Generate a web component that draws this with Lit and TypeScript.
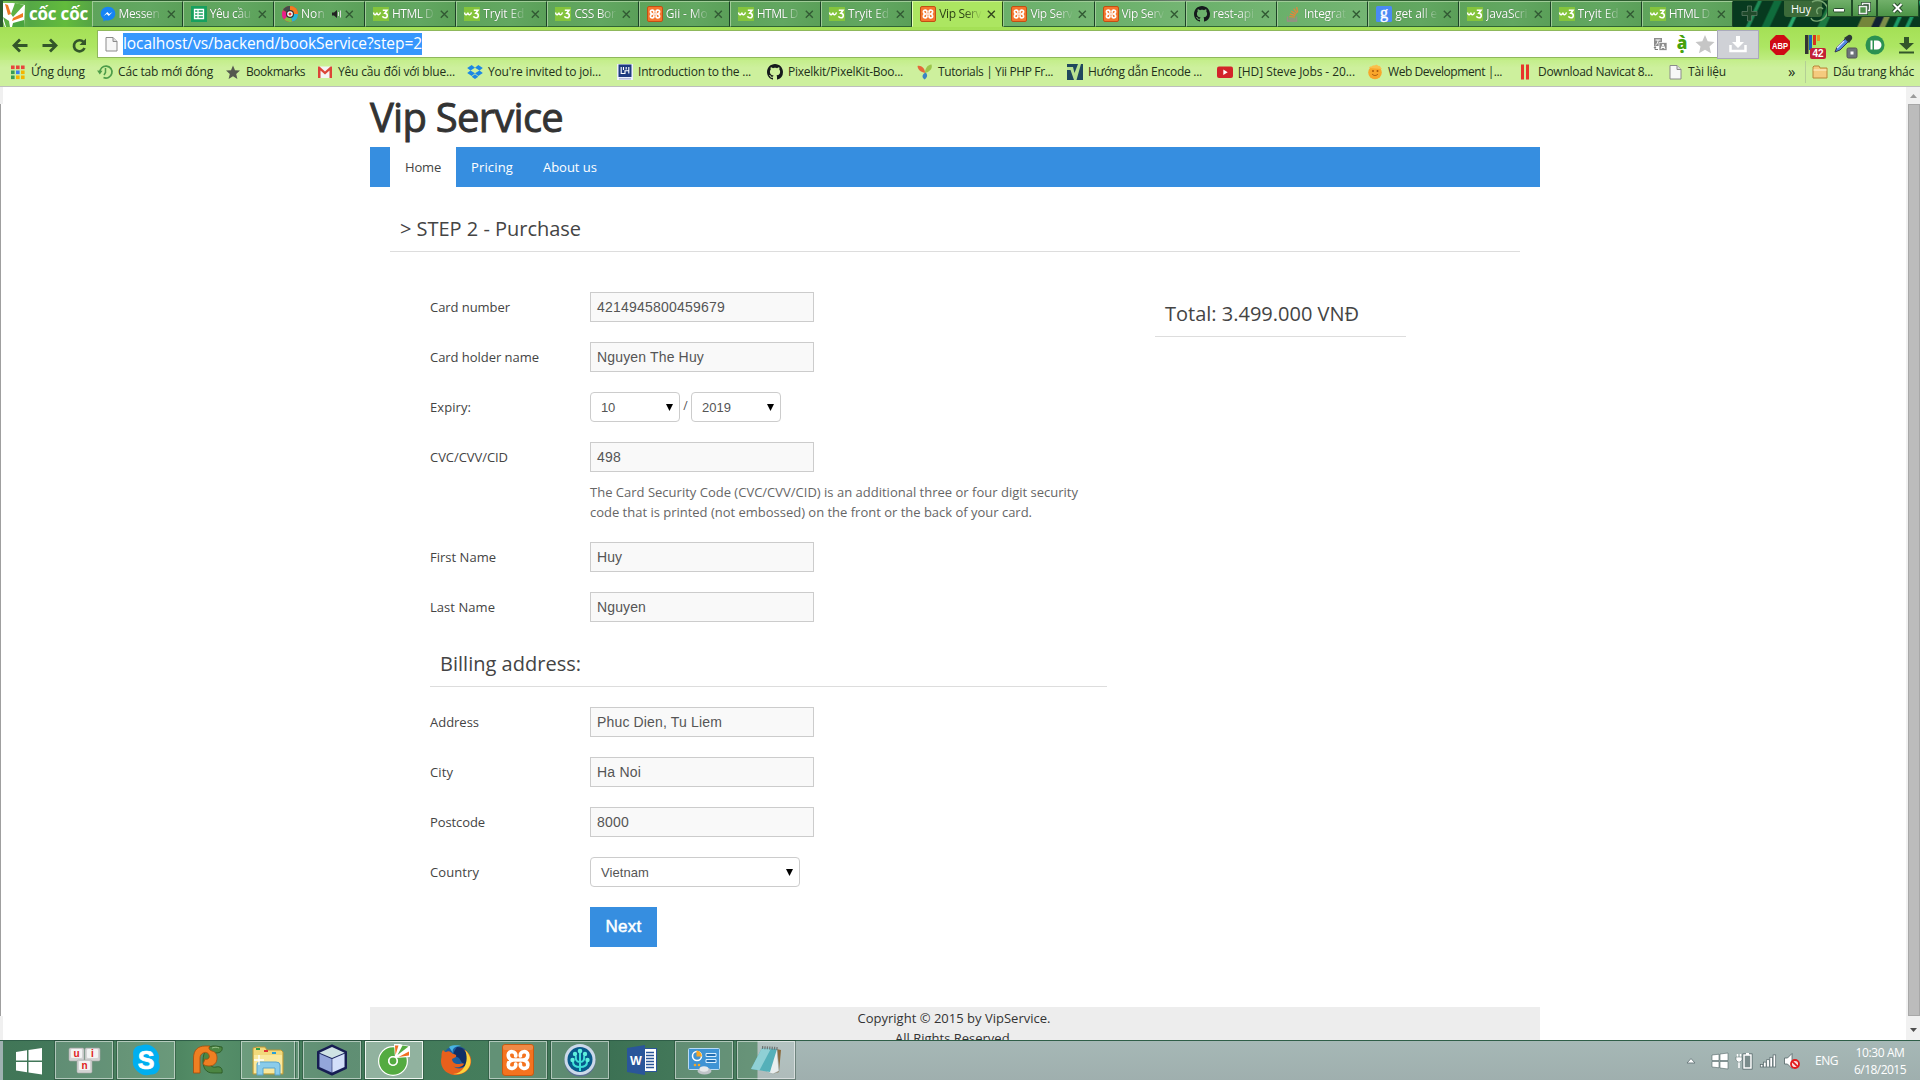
import { LitElement, html, css, svg, nothing } from "lit";
import { customElement } from "lit/decorators.js";

const ico = (body: unknown, w = 16, h = 16, vb = `0 0 ${w} ${h}`) =>
  html`<svg class="ico" width=${w} height=${h} viewBox=${vb}>${body}</svg>`;

const messenger = svg`<path d="M8 .8C3.900.8.7 3.800.7 7.600c0 2.200 1 4.100 2.700 5.400V15.500l2.300-1.300c.7.2 1.500.3 2.300.3 4.100 0 7.300-3 7.300-6.900S12.100.8 8 .8z" fill="#1684f5"/><path d="M3.500 10l3.800-4 2 1.900L12.500 6 8.800 10 6.800 8.100z" fill="#fff"/>`;
const sheets = svg`<rect width="16" height="16" fill="#17a05e"/><path d="M3.500 3.500h9v9h-9zM3.500 6.500h9M3.500 9.500h9M7 3.500v9" fill="none" stroke="#fff" stroke-width="1.300"/>`;
const disc = svg`<circle cx="8" cy="8" r="8" fill="#e93a3f"/><path d="M8 8L1 4A8 8 0 0 1 9 0z" fill="#444a4a"/><path d="M8 8V0a8 8 0 0 1 8 8z" fill="#f47b20"/><path d="M8 8h8a8 8 0 0 1-6 7.700z" fill="#24b6d6"/><path d="M8 8l2 7.700A8 8 0 0 1 2 13.300z" fill="#7dc243"/><path d="M8 8l-6 5.300A8 8 0 0 1 .6 5z" fill="#e8208b"/><circle cx="8" cy="8" r="4" fill="#333"/><circle cx="8" cy="8" r="2.800" fill="#fff"/><circle cx="8" cy="8" r="1.500" fill="#e33"/>`;
const w3 = svg`<rect y="1" width="16" height="14" fill="#84c43c"/><path d="M.6 6.500c.2 2 1 2.500 2 2 .8-.3 1.200-1 1.300-1.800.2 1.800 1 2.300 2 1.900 1-.4 1.300-1.200 1.600-2.200" fill="none" stroke="#fff" stroke-width="1.500"/><path d="M9.800 4.200h4.200l-2.200 3c3.400 0 3.200 4.600.2 4.600-1.300 0-2.200-.7-2.500-1.600" fill="none" stroke="#fff" stroke-width="1.600"/>`;
const xamppMark = svg`<path d="M6.900 6.100C7.300 3.700 3.500 3.300 3.400 5.600c0 1.400 1.100 2.200 2.200 2.400-1.100.2-2.200 1-2.200 2.400.1 2.300 3.900 1.900 3.500-.5M9.100 6.100C8.700 3.700 12.500 3.300 12.600 5.600c0 1.400-1.100 2.200-2.200 2.400 1.100.2 2.200 1 2.200 2.400-.1 2.300-3.900 1.900-3.500-.5M5.400 8h5.200" fill="none" stroke="#fff" stroke-width="1.700" stroke-linecap="round"/>`;
const xampp = svg`<rect x=".5" y=".5" width="15" height="15" rx="1.500" fill="#f4772e" stroke="#c24e13"/>${xamppMark}`;
const github = svg`<path fill="#15191c" d="M8 0C3.580 0 0 3.580 0 8c0 3.540 2.290 6.530 5.470 7.590.4.070.55-.17.55-.38 0-.19-.01-.82-.01-1.490-2.010.37-2.530-.49-2.690-.94-.09-.23-.48-.94-.82-1.130-.28-.15-.68-.52-.01-.53.63-.01 1.080.58 1.230.82.72 1.210 1.870.87 2.330.66.07-.52.28-.87.51-1.070-1.780-.2-3.640-.89-3.640-3.950 0-.87.31-1.590.82-2.150-.08-.2-.36-1.020.08-2.120 0 0 .67-.21 2.200.82.64-.18 1.320-.27 2-.27s1.360.09 2 .27c1.530-1.040 2.200-.82 2.200-.82.44 1.100.16 1.920.08 2.120.51.56.82 1.270.82 2.150 0 3.070-1.870 3.750-3.650 3.950.29.25.54.73.54 1.480 0 1.070-.01 1.930-.01 2.200 0 .21.15.46.55.38A8.010 8.010 0 0 0 16 8c0-4.420-3.580-8-8-8z"/>`;
const stack = svg`<path d="M2.500 10.500v4.500h9v-4.500" fill="none" stroke="#9d8a86" stroke-width="1.400"/><path d="M4.200 13h5.600" stroke="#9d8a86" stroke-width="1.300"/><path d="M4.300 10.600l5.600.5M4.900 8l5.400 1.500M6.300 5.200l4.800 2.900M8.700 2.600l3.300 4.500M11.700 1l1 5.300" stroke="#e0873c" stroke-width="1.300"/>`;
const google = svg`<rect width="16" height="16" rx="1.500" fill="#4a8af4"/><text x="8" y="11.500" text-anchor="middle" font-family="Liberation Serif,serif" font-size="16" fill="#fff" stroke="#fff" stroke-width=".4">g</text>`;
const docIcon = svg`<path d="M3 1.500h7l4 4v9.500H3z" fill="#f7f7f7" stroke="#8b8b8b"/><path d="M10 1.500v4h4" fill="#ddd" stroke="#8b8b8b"/>`;

const apps = svg`${["#e8453c", "#e8453c", "#e8453c", "#3a9b54", "#3b7ded", "#f4b400", "#3a9b54", "#f4b400", "#f4b400"].map(
  (c, i) => svg`<rect x=${1 + (i % 3) * 5} y=${1.5 + Math.floor(i / 3) * 5} width="3.600" height="3.600" fill=${c} />`)}`;
const recent = svg`<path d="M3 8.500a6 6 0 1 1 3.500 5" fill="none" stroke="#4d9c49" stroke-width="1.700"/><path d="M0 6.500l5.500.3L2.800 10.500z" fill="#4d9c49"/><path d="M8.500 4v4.500l-1.500 2.500" fill="none" stroke="#4d9c49" stroke-width="1.500"/>`;
const star = svg`<path d="M8 1.500l2 4.700 5 .4-3.800 3.300 1.200 5L8 12.200 3.600 14.900l1.200-5L1 6.600l5-.4z" fill="#55594f"/>`;
const gmail = svg`<rect x="1" y="2.500" width="14" height="11.500" fill="#f4f4f4"/><path d="M1 14V2.500h1.500L8 7.500l5.500-5H15V14h-2.500V6.600L8 10.500 3.500 6.600V14z" fill="#dc4437"/>`;
const dropbox = svg`<path d="M4.700 1L8 3.700 3.500 6.500.2 3.900zM11.300 1L8 3.700l4.500 2.800 3.300-2.600zM.2 9.100l3.300-2.600L8 9.300 4.700 12zM15.800 9.100l-3.300-2.600L8 9.300l3.300 2.700zM4.700 12.800L8 10.200l3.300 2.600L8 15z" fill="#1b87e5"/>`;
const intro = svg`<rect width="16" height="16" fill="#eef2fd"/><rect x="1.500" y=".5" width="13" height="12.500" fill="#1f3a80"/><path d="M4.200 3v6.500H8V6.800h3.800V3M6.500 3v3M9.200 3v2.500M11.800 7v2.500" fill="none" stroke="#fff" stroke-width="1.100"/><rect x="2" y="14" width="12" height="1.500" fill="#b9bdda"/>`;
const yii = svg`<path d="M8 9C4 8 1 6 .5 2 4 1 8 4 8 9z" fill="#e5673a"/><path d="M8 9c0-4 2-8 6.500-8.500C16 5 12 8 8 9z" fill="#9cc64b"/><path d="M7.500 15.500C4.500 13 5 10.500 8.500 8.500c2.500 2 2 5-1 7z" fill="#3b83c4"/>`;
const vIcon = svg`<rect width="16" height="16" fill="#20485e"/><path d="M0 3h6l1.500 6L11 0h3L9.500 16H7L3.500 6H0z" fill="#b8e291"/>`;
const youtube = svg`<rect y="2.500" width="16" height="11.500" rx="2" fill="#d3232a"/><path d="M6.300 5.500v5.500l4.400-2.700z" fill="#fff"/>`;
const sun = svg`<circle cx="8" cy="8.500" r="6.800" fill="#f9a62b"/><path d="M2 4c1-3 3 0 4-3 1 2 4-2 5 1 3-1 2 2 4 3z" fill="#fbbf4b"/><circle cx="6" cy="7" r="1" fill="#a8570b"/><circle cx="10.500" cy="7" r="1" fill="#a8570b"/><path d="M5 10c2 2 4 2 6 0" stroke="#a8570b" fill="none"/>`;
const bars = svg`<rect x="4" y=".5" width="3" height="15" fill="#e8352b"/><rect x="9" y=".5" width="3" height="15" fill="#e8352b"/>`;
const folder = svg`<path d="M1 4.500V14h14V4H8L7 2H2L1 3z" fill="#f5ca7e" stroke="#b98437"/><path d="M1.500 6h13" stroke="#fff2cf"/>`;

// icon, visible title, title width
const TABS: [unknown, string, number][] = [
  [messenger, "Messen", 41], [sheets, "Yêu cầu", 41], [disc, "Non", 24], [w3, "HTML D", 41], [w3, "Tryit Ed", 41], [w3, "CSS Bor", 41],
  [xampp, "Gii - Mo", 42], [w3, "HTML D", 41], [w3, "Tryit Ed", 41], [xampp, "Vip Serv", 42], [xampp, "Vip Serv", 42], [xampp, "Vip Serv", 42],
  [github, "rest-api", 41], [stack, "Integrat", 42], [google, "get all e", 42], [w3, "JavaScri", 41], [w3, "Tryit Ed", 41], [w3, "HTML D", 41],
];

// icon, label, label width, slot width
const MARKS: [unknown, string, number, number][] = [
  [apps, "Ứng dụng", 54, 87], [recent, "Các tab mới đóng", 95, 128], [star, "Bookmarks", 59, 92],
  [gmail, "Yêu cầu đối với blue...", 117, 150], [dropbox, "You're invited to joi...", 113, 150],
  [intro, "Introduction to the ...", 113, 150], [github, "Pixelkit/PixelKit-Boo...", 115, 150],
  [yii, "Tutorials | Yii PHP Fr...", 115, 150], [vIcon, "Hướng dẫn Encode ...", 114, 150],
  [youtube, "[HD] Steve Jobs - 20...", 117, 150], [sun, "Web Development |...", 114, 150],
  [bars, "Download Navicat 8...", 115, 150], [docIcon, "Tài liệu", 38, 121],
];

const keycap = (x: number, y: number, t: string) => svg`<rect x=${x} y=${y} width="15" height="13" rx="1.500" fill="#d4d4d4" stroke="#aaa" stroke-width=".6"/><rect x=${x + 2} y=${y + 1} width="11" height="9" rx="1" fill="#f3f3f3"/><text x=${x + 7.5} y=${y + 8.5} text-anchor="middle" font-family="Liberation Sans,sans-serif" font-weight="700" font-size="10" fill="#e02020">${t}</text>`;

const tUni = svg`${keycap(1, 4, "u")}${keycap(17, 4, "i")}${keycap(9, 16, "n")}`;
const tSkype = svg`<path d="M3 9A7.500 7.500 0 0 1 11 1.500 13.500 13.500 0 0 1 28.500 18 8.200 8.200 0 0 1 21 30.500 14 14 0 0 1 3.500 13z" fill="#00aff0"/><text x="16" y="24.500" text-anchor="middle" font-family="Liberation Sans,sans-serif" font-weight="700" font-size="25" fill="#fff" stroke="#fff" stroke-width=".7">S</text>`;
const tPs = svg`<path d="M30 3c1 4-2 6-6 6-5 0-7 3-7 7 0 5 3 8 7 7 4-1 7 1 6 6H21c-7 0-10-5-10-12C11 8 15 1 24 2z" fill="#4c8643" stroke="#27541f" stroke-width=".8"/><path d="M1.500 29V14C1.500 6 6 2 13 2h5c-2 2-1 4 2 5 4 1 5 4 5 7 0 5-3 8-8 8-3 0-5-1-6-2l2-5c3 1 5-1 4-4-1-3-4-3-6-2-2 1-3 3-3 5v15z" fill="#ef7f22" stroke="#a44c0b" stroke-width=".8"/><path d="M20 4c3-1 5-1 7 0" stroke="#9cc68e" fill="none"/>`;
const tFolder = svg`<path d="M1 30V4l4-1h8l2 3h14l2 2v22z" fill="#f2d97b" stroke="#b99738"/><path d="M2 11h28v18H2z" fill="#fae89c"/><path d="M4 4h4v2H4z" fill="#2f9e46"/><path d="M12 6h4v2h-4z" fill="#d33"/><path d="M20 8h4v2h-4z" fill="#28a0d8"/><path d="M5 31V20q0-2 3-2h16q4 0 4 3v10h-5v-7H11v7z" fill="#8accea" stroke="#5aa4cc"/><path d="M7 11v10M2 16h10" stroke="#fff" stroke-width="1.300"/>`;
const tCube = svg`<path d="M16 1.500L30 8v16L16 30.500 2 24V8z" fill="#1c2660" stroke="#171d52" stroke-width="2" stroke-linejoin="round"/><path d="M16 3L28.500 8.800 16 14 3.500 8.800z" fill="#cfe3e4"/><path d="M3.500 9.800L15.700 15v13.500L3.500 23z" fill="#93a6da"/><path d="M28.500 9.800L16.300 15v13.500L28.500 23z" fill="#d3dffa"/>`;
const tCoc = svg`<circle cx="15" cy="17" r="15" fill="#fff"/><circle cx="15" cy="17" r="9.300" fill="none" stroke="#54ab41" stroke-width="9"/><circle cx="15" cy="17" r="4.200" fill="#54ab41" stroke="#fff" stroke-width="1.600"/><path d="M17 14L16 0h6l3 1 7 1v11z" fill="#fff"/><path d="M17.500 11L17 1.500h3.500z" fill="#f26f21"/><path d="M19.500 11l5-9.500 6 1z" fill="#54ab41"/><path d="M20.500 13L31 7.500v4z" fill="#f26f21"/>`;
const tFox = svg`<circle cx="16" cy="16" r="14" fill="#1d5e9f"/><path d="M17 3a12 12 0 0 1 12 11c1 8-9 12-14 7l9-1c-4-2-3-6-7-7-4 0-4-4-2-7z" fill="#122f66"/><path d="M9 3c5-3 12-1 12-1-8 0-9 4-8 7z" fill="#48b4e3"/><path d="M3 6c1 1 2 2 3 2 3-2 5 0 7 2 2 0 4 1 3 3l-4 2c0 3 3 5 6 5 3 0 5-1 6 0-2 4-9 4-11 2 5 5 14 2 15-5 1-5-2-10-5-12 6 3 9 8 8 14-1 7-8 12-15 12C6 31-1 23 1.500 13c0-3 0-5 1.500-7z" fill="#e8601c"/><path d="M25 6c6 5 8 14 2 20-4 4-9 5-14 4 10 0 17-12 12-24z" fill="#fcd33c"/>`;
const tXampp = svg`<rect x=".5" y=".5" width="31" height="31" rx="2.500" fill="#f4731f" stroke="#c75a12"/><rect x="1" y="1" width="30" height="5" rx="2" fill="#f08a46"/><g transform="translate(-1 -1) scale(2.130)">${xamppMark}</g>`;
const tTree = svg`<circle cx="16" cy="17" r="15.500" fill="#5b6f92"/><circle cx="16" cy="15.500" r="15.500" fill="#cbd9ea"/><circle cx="16" cy="15.500" r="12.500" fill="#085a8b"/><path d="M16 27V8M16 23c-5 0-7-2-7-5M16 23c5 0 7-2 7-5M16 18c-3 0-5-2-4-6M16 18c3 0 5-2 4-6" stroke="#3fe0d8" stroke-width="2" fill="none"/><g fill="#5ff0dc"><circle cx="16" cy="7" r="2.300"/><circle cx="11" cy="10" r="2.200"/><circle cx="21" cy="10" r="2.200"/><circle cx="8.500" cy="16" r="2.200"/><circle cx="23.500" cy="16" r="2.200"/></g>`;
const tWord = svg`<rect x="16" y="4.500" width="14.500" height="23" fill="#fff" stroke="#2a569a"/><path d="M20 8.500h8M20 11.500h8M20 14.500h8M20 17.500h8M20 20.500h8M20 23.500h8" stroke="#2a569a" stroke-width="1.300"/><path d="M1 4l18-3v30L1 28z" fill="#2a569a"/><text x="10" y="20.500" text-anchor="middle" font-family="Liberation Sans,sans-serif" font-weight="700" font-size="12.500" fill="#fff">W</text>`;
const tPanel = svg`<rect x=".5" y="4.500" width="31" height="21" rx="1" fill="#3f93d4" stroke="#b8dbf5"/><circle cx="9" cy="12" r="4.500" fill="none" stroke="#fff" stroke-width="1.500"/><path d="M8.500 12.500V6.500a6 6 0 0 1 5.500 6z" fill="#f7a828"/><path d="M18 9.500h10v3H18zM18 15.500h10v3H18z" fill="#2470b5" stroke="#d9efff"/><circle cx="7" cy="21" r="1.300" fill="#f7a828"/><circle cx="11" cy="21" r="1.300" fill="#f7a828"/><ellipse cx="16.500" cy="27" rx="7" ry="3.500" fill="#bfc4c8"/><ellipse cx="16" cy="25" rx="4.500" ry="2.800" fill="#e6e9eb"/>`;
const tNote = svg`<path d="M26 5l5 1-2 22-7 2z" fill="#8b6a3e"/><path d="M13 4l14 1 2 22-6 3-6-2z" fill="#e9eeee" stroke="#9aa" stroke-width=".6"/><path d="M12 4l15 1-7 23L1 25z" fill="#55b0b9"/><path d="M12 4l9 .6L9.500 26.300 1 25z" fill="#8fd0d5"/><path d="M12 3.500l16 1" stroke="#6d7472" stroke-width="3" stroke-dasharray="1.200 1.200"/>`;

const TASKS: [unknown, string][] = [
  [tUni, "framed"], [tSkype, "framed"], [tPs, ""], [tFolder, "framed group"], [tCube, "framed"], [tCoc, "framed active"],
  [tFox, ""], [tXampp, "framed"], [tTree, "framed"], [tWord, ""], [tPanel, "framed"], [tNote, "framed"],
];

@customElement("app-root")
export class AppRoot extends LitElement {
  static styles = css`
    :host { display: block; width: 1920px; height: 1080px; overflow: hidden; background: #fff; font-family: "Open Sans", "Noto Sans", sans-serif; }
    * { box-sizing: border-box; }
    .screen { display: flex; flex-direction: column; height: 1080px; }
    .ico { display: block; flex: none; overflow: visible; }
    .fit { white-space: pre; display: inline-block; flex: none; }

    .tabstrip { display: flex; height: 27px; padding: 1px 0 0 3px; background: linear-gradient(90deg, #2c5a2e 0, #2d5c2f 46%, #555f5a 50%, #2d5c2f 55%, #6f7f74 62%, #2d5c2f 70%); }
    .brand { flex: none; width: 88.500px; height: 26px; display: flex; align-items: center; background: linear-gradient(90deg, #7fc558, #55a846 30%, #62bb3c 70%, #55a445); }
    .brand-name { margin: -1px 0 0 4px; color: #fff; font: 700 17px/24px "Open Sans", sans-serif; }
    .tab { flex: none; width: 91.200px; height: 26px; display: flex; align-items: center; padding-left: 7px; color: #fff; background: linear-gradient(100deg, #5ea45b, #62a761 60%, #5a9f58); border: 1px solid #9fcb97; border-right-color: #1c4226; border-bottom-color: #2f6535; font-size: 12px; }
    .tab.light { background: linear-gradient(100deg, #6ab06a, #74b573); }
    .tab.active { color: #2c4016; background: #ace661; border-color: #caf28c #274c17 #ace661 #e6ffb8; }
    .tab-title { width: 44px; margin-left: 3px; white-space: nowrap; line-height: 20px; text-shadow: 0 0 1px #2d5b2d; mask-image: linear-gradient(90deg, #000 58%, transparent 98%); }
    .active .tab-title { text-shadow: none; }
    .tab-title.short { width: 26px; }
    .tab-x { margin-left: 4px; }
    .speaker { margin: 0 -1px 0 5px; }
    .tab .speaker + .tab-x { margin-left: 4px; }
    .scenery { flex: 1; min-width: 0; height: 26px; display: flex; align-items: flex-start; background:
      linear-gradient(115deg, transparent 12%, #1f8b56 13% 14%, transparent 15% 20%, #0f6c3c 21% 24%, transparent 25% 33%, #2aa76c 34% 35%, transparent 36% 48%, #1c7a42 49% 52%, transparent 53% 68%, #74863a 69% 75%, #123 76% 79%, #7c8f49 80% 82%, transparent 83% 86%, #1b9a66 87% 88%, transparent 89% 92%, #1b9a66 93% 94%, transparent 95%), #073a1f; }
    .plus { margin: 5px 0 0 9px; }
    .user { margin: 0 0 0 27px; width: 38px; height: 16px; padding-left: 7px; background: #3b6a39; border-radius: 0 0 3px 3px; color: #fff; font-size: 11px; line-height: 16px; }
    .curl { width: 0; }
    .winbtns { display: flex; margin-left: 5px; margin-top: -1px; }
    .winbtn { height: 17px; display: grid; place-items: center; background: linear-gradient(#71b06a, #4c9447); border: 1px solid #1f4a27; border-top: 0; }
    .wmin { width: 25px; } .wmax { width: 25px; } .wclose { width: 42px; }

    .toolbar { display: flex; height: 33px; background: linear-gradient(#a4e055, #ade663 60%, #bfec82); }
    .navbtns { display: flex; align-items: center; width: 97px; padding: 3px 0 0 12px; gap: 14px; }
    .address { width: 1620px; height: 28px; margin-top: 3px; display: flex; align-items: center; background: #fff; border: 1px solid #8fb85c; border-right: 0; padding-left: 5px; }
    .url { margin-left: 4px; height: 22px; background: #3797fd; color: #fff; font-size: 15.500px; line-height: 21px; }
    .addr-icons { display: flex; align-items: center; gap: 9px; margin-left: auto; padding-right: 3px; }
    .dl { width: 42px; height: 29px; margin-top: 3px; background: #cfd1d6; border: 1px solid #aab; display: grid; place-items: center; }
    .exts { display: flex; align-items: center; padding: 2px 0 0 11px; gap: 12px; }

    .bookmarks { display: flex; align-items: center; height: 26px; padding: 0 0 2px 10px; background: linear-gradient(#c4ee8b, #cdf09d 30%); color: #22301a; font-size: 12px; }
    .mark { display: flex; align-items: center; gap: 5px; flex: none; line-height: 20px; }
    .more { width: 15px; font-size: 15px; line-height: 16px; margin-top: -3px; }
    .sep { width: 1px; height: 22px; margin-left: 2px; background: #b4cf95; }
    .other { margin-left: 6px; }

    .view { display: flex; flex: none; height: 954px; border-top: 1px solid #bdbfbd; overflow: hidden; }
    .edge { width: 3px; flex: none; display: flex; flex-direction: column; }
    .edge-top { height: 17px; background: #f0f0f0; }
    .edge-mid { height: 912px; border-left: 1px solid #9f9f9f; }
    .edge-bot { flex: 1; background: #f0f0f0; }
    .page { flex: 1; padding-left: 367px; }
    .site { width: 1170px; color: #333; font-size: 13px; line-height: 20px; }
    h1 { margin: 0; height: 60px; padding-top: 3px; font-size: 40px; line-height: 54px; font-weight: 400; color: #333; -webkit-text-stroke: .9px #333; }
    nav { display: flex; height: 40px; padding-left: 20px; background: #368ee0; color: #fff; }
    nav span { flex: none; }
    .item { padding: 10px 15px; font-weight: 500; }
    .item.on { background: #fff; color: #444; font-weight: 400; }
    .content { padding: 26px 20px 0; height: 820px; }
    .sect { margin: 0; font-size: 20px; font-weight: 400; color: #444; border-bottom: 1px solid #ddd; padding: 0 10px; line-height: 34px; }
    .step { height: 39px; line-height: 32px; }
    .cols { display: flex; padding-left: 40px; padding-top: 40px; }
    .form { width: 677px; }
    .row { display: flex; height: 30px; margin-bottom: 20px; }
    .lab { width: 160px; flex: none; padding-top: 5px; color: #444; }
    .input { width: 224px; height: 30px; border: 1px solid #ccc; background: #f9f9f9; color: #555; padding: 0 6px; font: 14px/28px "Liberation Sans", Arial, sans-serif; }
    .select { width: 90px; height: 30px; border: 1px solid #ccc; border-radius: 4px; color: #555; padding: 1px 6px 0 10px; font: 13px/28px "Liberation Sans", Arial, sans-serif; display: flex; align-items: center; justify-content: space-between; }
    .select .ico { margin-top: -1px; }
    .select.wide { width: 210px; }
    .slash { width: 11px; text-align: center; font-size: 12px; padding-top: 4px; color: #555; }
    .help { margin: -10px 0 20px 160px; color: #666; display: flex; flex-direction: column; align-items: flex-start; }
    .billing { height: 40px; margin: 25px 0 20px; }
    .next { width: 67px; height: 40px; background: #368ee0; color: #fff; text-align: center; font: 400 17px/40px "Liberation Sans", Arial, sans-serif; -webkit-text-stroke: .5px #fff; }
    .total { width: 251px; height: 40px; margin: 5px 0 0 48px; }
    .foot { height: 33px; background: #ededed; display: flex; flex-direction: column; align-items: center; line-height: 20px; padding: 1px 2px 0 0; overflow: hidden; }
    .scroll { width: 14px; flex: none; background: #f1f1f1; display: flex; flex-direction: column; align-items: center; }
    .arrow { height: 17px; display: grid; place-items: center; }
    .arrow.down { height: 24px; padding-top: 3px; }
    .thumb { height: 912px; width: 12px; margin-left: 2px; background: #bcbcbc; border: 1px solid #a8a8a8; }

    .taskbar { display: flex; height: 40px; padding-left: 3px; border-top: 1px solid #2f5e48; background: linear-gradient(90deg, #9fb1b1 3px, #417657 3px, #42785a 55px, #4f8762 180px, #57906a 210px, #417959 330px, #457d5c 500px, #3b7053 600px, #4b8060 757px, transparent 758px), linear-gradient(#a6b8b6, #9fafae); }
    .start { width: 52px; display: grid; place-items: center; }
    .task { width: 58px; height: 38px; margin-right: 4px; display: grid; place-items: center; flex: none; }
    .framed { background: rgba(255,255,255,.16); border: 1px solid rgba(255,255,255,.5); box-shadow: 0 0 0 1px rgba(30,60,45,.4); }
    .framed.active { background: rgba(255,255,255,.42); border-color: #eef6f0; }
    .framed.group { padding-right: 4px; background: linear-gradient(90deg, transparent 52px, rgba(255,255,255,.5) 52px 53px, #3c6b50 53px 54px, transparent 54px), rgba(255,255,255,.16); }
    .tray { margin-left: auto; display: flex; align-items: center; color: #fff; }
    .gap { width: 8px; } .gap.big { width: 17px; }
    .lang { margin-left: 15px; font-size: 12px; }
    .clock { width: 54px; margin: 0 13px 0 15px; display: flex; flex-direction: column; align-items: center; font-size: 12px; line-height: 17px; }
  `;

  firstUpdated() {
    // Track each measured label to its nominal width.
    this.renderRoot.querySelectorAll<HTMLElement>("[data-w]").forEach((el) => {
      const n = [...(el.textContent ?? "")].length;
      const gap = (Number(el.dataset.w) - el.getBoundingClientRect().width) / n;
      el.style.letterSpacing = `${gap.toFixed(3)}px`;
    });
  }

  fit(text: string, w: number, cls = "") {
    return html`<span class="fit ${cls}" data-w=${w}>${text}</span>`;
  }

  tab([icon, title, w]: [unknown, string, number], i: number) {
    const sound = i === 2;
    const dark = i === 9 ? "#33471f" : "#325a34";
    return html`<div class="tab ${i === 9 ? "active" : i > 9 && i < 14 ? "light" : ""}">
      ${ico(icon)}
      <span class="tab-title ${sound ? "short" : ""}">${this.fit(title, w)}</span>
      ${sound ? html`<span class="speaker">${ico(svg`<path d="M0 3.500h2L5 1v8L2 6.500H0z" fill="#222"/><path d="M6.500 3v4M8.500 1.500v7" stroke="#ddd"/>`, 10, 10)}</span>` : nothing}
      <span class="tab-x">${ico(svg`<path d="M.8.800l7 7M7.800.8l-7 7" stroke=${dark} stroke-width="1.400"/>`, 9, 9)}</span>
    </div>`;
  }

  field(label: string, lw: number, value: string, vw: number) {
    return html`<div class="row"><span class="lab">${this.fit(label, lw)}</span><div class="input">${this.fit(value, vw)}</div></div>`;
  }

  select(value: string, vw: number, cls = "") {
    return html`<div class="select ${cls}">${this.fit(value, vw)}${ico(svg`<path d="M0 0h7L3.500 7z" fill="#000"/>`, 7, 7)}</div>`;
  }

  chrome() {
    return html`
      <div class="tabstrip">
        <div class="brand">
          ${ico(svg`<path d="M0 2h10l12 2-1 22H2L0 20z" fill="#fff"/><path d="M2 3l3 11 3-1-3-9z" fill="#f07a23"/><path d="M12 2L8 13l2 3L21 4z" fill="#5cb044"/><path d="M20 12l-10 5-1 3 11-4z" fill="#f07a23"/><path d="M0 16l6 4 1 6H3z" fill="#5cb044"/><path d="M10 22l11-3v7H9z" fill="#4ba53f"/>`, 22, 26)}
          ${this.fit("cốc cốc", 59, "brand-name")}
        </div>
        ${TABS.map((t, i) => this.tab(t, i))}
        <div class="scenery">
          <span class="plus">${ico(svg`<path d="M5.500 0h4v5.500H15v4H9.500V15h-4V9.500H0v-4h5.500z" fill="#1f4a2a" stroke="#5c7a62" stroke-width=".8"/>`, 15, 15)}</span>
          <span class="user">${this.fit("Huy", 20)}</span>
          <span class="curl">${ico(svg`<path d="M-10 1c10-5 18 4 15 12s-14 9-16 4M-4 13c-4-4 2-9 5-5" fill="none" stroke="#7aa873" stroke-width="1.400"/>`, 12, 24)}</span>
          <div class="winbtns">
            <div class="winbtn wmin">${ico(svg`<rect x=".5" y="5.500" width="11" height="3.500" rx="1" fill="#fff" stroke="#264b2a"/>`, 12, 10)}</div>
            <div class="winbtn wmax">${ico(svg`<path d="M4.500 1.500h7v7h-7z" fill="none" stroke="#264b2a" stroke-width="3"/><path d="M4.500 1.500h7v7h-7z" fill="none" stroke="#eee" stroke-width="1.500"/><path d="M1.500 4.500h7v7h-7z" fill="#4f934b" stroke="#264b2a" stroke-width="3"/><path d="M1.500 4.500h7v7h-7z" fill="#4f934b" stroke="#eee" stroke-width="1.600"/>`, 13, 13)}</div>
            <div class="winbtn wclose">${ico(svg`<path d="M1.500 1l8 8M9.500 1l-8 8" stroke="#264b2a" stroke-width="4"/><path d="M1.500 1l8 8M9.500 1l-8 8" stroke="#fff" stroke-width="2"/>`, 11, 10)}</div>
          </div>
        </div>
      </div>
      <div class="toolbar">
        <div class="navbtns">
          ${ico(svg`<path d="M8 1.500L2 7.500l6 6M2.500 7.500H15.500" fill="none" stroke="#33562a" stroke-width="2.800"/>`, 16, 15)}
          ${ico(svg`<path d="M8 1.500l6 6-6 6M13.500 7.500H.5" fill="none" stroke="#33562a" stroke-width="2.800"/>`, 16, 15)}
          ${ico(svg`<path d="M12.500 10a5.500 5.500 0 1 1-1-6" fill="none" stroke="#33562a" stroke-width="2.700"/><path d="M14 .5v6.500H7.500z" fill="#33562a"/>`, 15, 15)}
        </div>
        <div class="address">
          ${ico(docIcon)}
          ${this.fit("localhost/vs/backend/bookService?step=2", 299, "url")}
          <div class="addr-icons">
            ${ico(svg`<path d="M1 1h8v8H1z" fill="#8d8d8d"/><path d="M2.500 3h5M5 3c0 3-1 4-2.500 5" stroke="#fff" fill="none"/><path d="M6 5.500h8v8H6z" fill="#8d8d8d" stroke="#fff" stroke-width=".7"/><path d="M8 12l2-5 2 5M8.700 10.500h2.600" stroke="#fff" fill="none"/><path d="M2 10v2.500h3M1 11l1-1.500L3 11" stroke="#777" fill="none"/>`, 15, 15)}
            ${ico(svg`<text x="5" y="13.500" text-anchor="middle" font-family="Open Sans,sans-serif" font-weight="800" font-size="17" fill="#47a20d">ạ̀</text>`, 10, 18)}
            ${ico(svg`<path d="M9 0l2.700 6.200L18.500 7l-5 4.500 1.500 6.800L9 14.800 3 18.300l1.500-6.800L-.5 7l6.800-.8z" fill="#c6c6c6"/>`, 18, 18)}
          </div>
        </div>
        <div class="dl">${ico(svg`<path d="M7 0h4v6h4l-6 6-6-6h4z" fill="#fff"/><path d="M1.500 9v6h15V9" fill="none" stroke="#fff" stroke-width="2.500"/>`, 18, 17)}</div>
        <div class="exts">
          ${ico(svg`<path d="M6 0h8l6 6v8l-6 6H6l-6-6V6z" fill="#cf0a14"/><text x="10" y="13.500" text-anchor="middle" font-family="Liberation Sans,sans-serif" font-weight="700" font-size="9.500" textLength="16" lengthAdjust="spacingAndGlyphs" fill="#fff">ABP</text>`, 20, 20)}
          ${ico(svg`<path d="M3 0h3.500v19H3z" fill="#333"/><path d="M7 0h3v15H7z" fill="#1a63b8"/><path d="M11 0h3v10h-3z" fill="#d8331c"/><path d="M15 0h3v6h-3z" fill="#e9911e"/><rect x="8" y="13" width="16" height="11" rx="2" fill="#c22036"/><text x="16" y="22" text-anchor="middle" font-family="Liberation Sans,sans-serif" font-weight="700" font-size="10" fill="#fff">42</text>`, 20, 20)}
          ${ico(svg`<path d="M1 17l2-5L12 3l3 3-9 9z" fill="#4f86e0" stroke="#335"/><path d="M3 13l7-7" stroke="#dce8ff" stroke-width="1.500"/><path d="M10 3l5 5 1.500-2c3-2 2-7-2-6z" fill="#2c3a38"/><rect x="13" y="13" width="10" height="10" rx="1.500" fill="#6e747a" stroke="#555"/><rect x="16.500" y="16.500" width="3" height="3" fill="#fff"/>`, 19, 20)}
          ${ico(svg`<circle cx="10" cy="10" r="9.500" fill="#2b9151"/><path d="M5.500 5.500h2v9h-2zM9 5.500h3a4.500 4.500 0 0 1 0 9H9z" fill="#fff"/>`, 20, 20)}
          ${ico(svg`<path d="M7 1h5v6h5l-7.500 7L2 7h5z" fill="#33562a"/><path d="M2 16.500h15" stroke="#33562a" stroke-width="2"/>`, 17, 18)}
        </div>
      </div>
      <div class="bookmarks">
        ${MARKS.map(([i, t, w, slot]) => html`<div class="mark" style="width:${slot}px">${ico(i)}${this.fit(t, w)}</div>`)}
        <span class="more">»</span><span class="sep"></span>
        <div class="mark other">${ico(folder)}${this.fit("Dấu trang khác", 81)}</div>
      </div>`;
  }

  page() {
    return html`<div class="site">
      <h1>${this.fit("Vip Service", 193)}</h1>
      <nav>
        <span class="item on">${this.fit("Home", 36)}</span>
        <span class="item">${this.fit("Pricing", 42)}</span>
        <span class="item">${this.fit("About us", 54)}</span>
      </nav>
      <div class="content">
        <h2 class="sect step">${this.fit("> STEP 2 - Purchase", 181)}</h2>
        <div class="cols">
          <div class="form">
            ${this.field("Card number", 80, "4214945800459679", 128)}
            ${this.field("Card holder name", 109, "Nguyen The Huy", 107)}
            <div class="row"><span class="lab">${this.fit("Expiry:", 41)}</span>${this.select("10", 14)}<span class="slash">/</span>${this.select("2019", 29)}</div>
            ${this.field("CVC/CVV/CID", 78, "498", 24)}
            <div class="help">
              ${this.fit("The Card Security Code (CVC/CVV/CID) is an additional three or four digit security", 488)}
              ${this.fit("code that is printed (not embossed) on the front or the back of your card.", 442)}
            </div>
            ${this.field("First Name", 66, "Huy", 25)}
            ${this.field("Last Name", 65, "Nguyen", 49)}
            <h2 class="sect billing">${this.fit("Billing address:", 141)}</h2>
            ${this.field("Address", 49, "Phuc Dien, Tu Liem", 125)}
            ${this.field("City", 23, "Ha Noi", 44)}
            ${this.field("Postcode", 55, "8000", 32)}
            <div class="row"><span class="lab">${this.fit("Country", 49)}</span>${this.select("Vietnam", 48, "wide")}</div>
            <div class="row"><span class="lab"></span><div class="next">${this.fit("Next", 36)}</div></div>
          </div>
          <div><h2 class="sect total">${this.fit("Total: 3.499.000 VNĐ", 194)}</h2></div>
        </div>
      </div>
      <div class="foot">${this.fit("Copyright © 2015 by VipService.", 193)}${this.fit("All Rights Reserved.", 118)}</div>
    </div>`;
  }

  taskbar() {
    return html`<div class="taskbar">
      <div class="start">${ico(svg`<path d="M0 4l11-1.700V12.500H0zM12.500 2L26 0v12.500H12.500zM0 14h11v10.200L0 22.500zM12.500 14H26v12.500l-13.500-2z" fill="#fff"/>`, 26, 26)}</div>
      ${TASKS.map(([i, c]) => html`<div class="task ${c}">${ico(i, 32, 32)}</div>`)}
      <div class="tray">
        ${ico(svg`<path d="M0 5L4 .5 8 5z" fill="#fff" stroke="#66777a" stroke-width=".9"/>`, 8, 6)}
        <span class="gap big"></span>
        ${ico(svg`<path d="M0 2l7-.8v6.300H0zM8 1l8-1v7.500H8zM0 8.500h7v6.300L0 14zM8 8.500h8V16l-8-1z" fill="#fff" stroke="#536467" stroke-width=".6"/>`, 16, 16)}
        <span class="gap"></span>
        ${ico(svg`<path d="M1.500 1v3M4.500 1v3M3 9v6" stroke="#fff" stroke-width="1.500"/><path d="M0 4h6v3L4 9H2L0 7z" fill="#fff" stroke="#536467" stroke-width=".5"/><rect x="8" y="2" width="7" height="13" fill="none" stroke="#536467" stroke-width="3"/><rect x="8" y="2" width="7" height="13" fill="#7b8c8c" stroke="#fff" stroke-width="1.500"/><path d="M10 1h3" stroke="#fff" stroke-width="2"/>`, 16, 16)}
        <span class="gap"></span>
        ${ico(svg`${[0, 1, 2, 3, 4].map((k) => svg`<rect x=${k * 3.2 + 0.3} y=${10.5 - k * 2.4} width="2.600" height=${2.5 + k * 2.4} fill="#fff" stroke="#536467" stroke-width=".7"/>`)}`, 16, 13)}
        <span class="gap"></span>
        ${ico(svg`<path d="M.5 5h3L8 .5v15L3.500 11h-3z" fill="#fff" stroke="#536467" stroke-width=".8"/><circle cx="11" cy="11" r="4" fill="#f8dede" stroke="#e11b1b" stroke-width="1.800"/><path d="M8.300 8.300l5.400 5.400" stroke="#e11b1b" stroke-width="1.800"/>`, 16, 16)}
        <span class="lang">${this.fit("ENG", 23)}</span>
        <div class="clock">${this.fit("10:30 AM", 49)}${this.fit("6/18/2015", 52)}</div>
      </div>
    </div>`;
  }

  render() {
    return html`<div class="screen">
      ${this.chrome()}
      <div class="view">
        <div class="edge"><div class="edge-top"></div><div class="edge-mid"></div><div class="edge-bot"></div></div>
        <div class="page">${this.page()}</div>
        <div class="scroll">
          <div class="arrow">${ico(svg`<path d="M0 4L3.500 0 7 4z" fill="#9b9b9b"/>`, 7, 4)}</div>
          <div class="thumb"></div>
          <div class="arrow down">${ico(svg`<path d="M0 0h7L3.500 4z" fill="#505050"/>`, 7, 4)}</div>
        </div>
      </div>
      ${this.taskbar()}
    </div>`;
  }
}
